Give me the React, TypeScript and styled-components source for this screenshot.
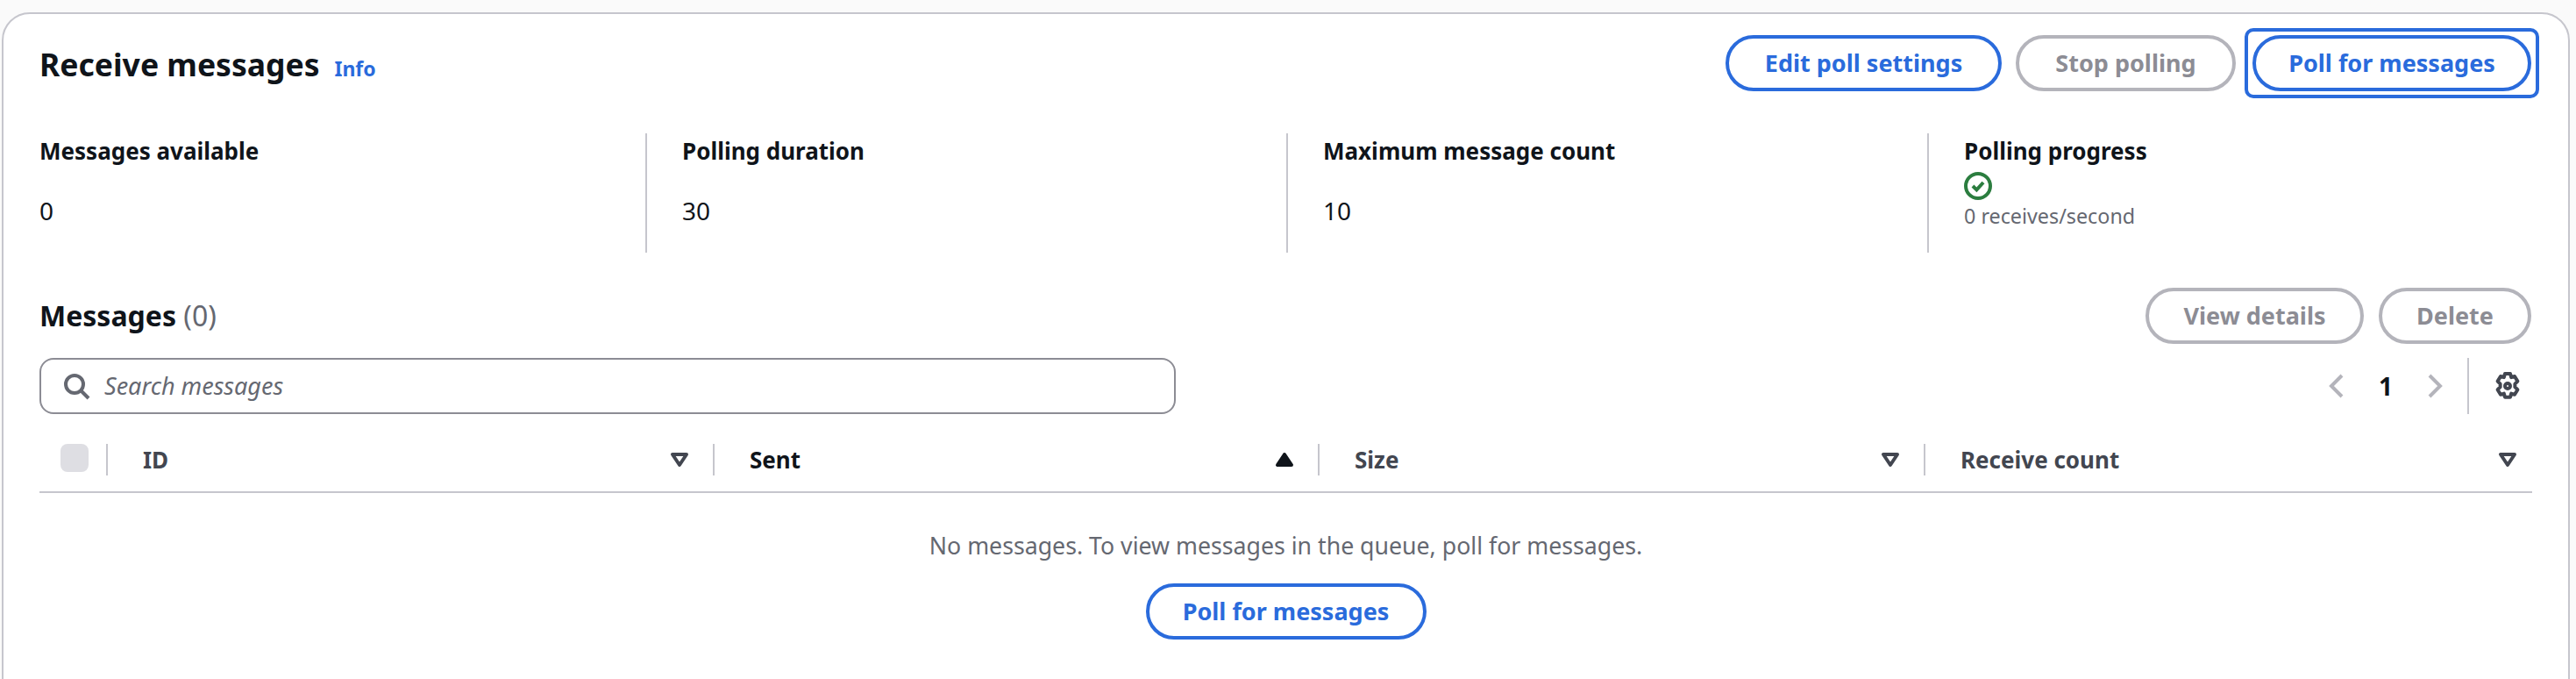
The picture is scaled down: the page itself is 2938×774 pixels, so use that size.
import styled, { createGlobalStyle } from "styled-components";

const GlobalStyle = createGlobalStyle`
  html, body {
    margin: 0;
    height: 774px;
    overflow: hidden;
    background: #fafafa;
    font-family: "Noto Sans", "Open Sans", sans-serif;
    font-size: 28px;
    line-height: 40px;
    color: #0f141a;
  }
`;

const Card = styled.section`
  box-sizing: border-box;
  width: 2929px;
  height: 860px;
  margin: 14px 0 0 2px;
  padding: 24px 41px 0 41px;
  background: #fff;
  border: 2px solid #c6c6cd;
  border-radius: 32px;
`;

const HeaderRow = styled.header`
  display: flex;
  justify-content: space-between;
  align-items: center;
  height: 64px;
  padding-right: 1px;
`;

const TitleGroup = styled.div`
  display: flex;
  align-items: baseline;
  gap: 17px;
  padding-top: 2px;
`;

const Title = styled.h2`
  margin: 0;
  font-size: 35.5px;
  line-height: 48px;
  font-weight: 700;
`;

const InfoLink = styled.a`
  font-size: 23px;
  font-weight: 700;
  color: #2a6bdc;
`;

const ButtonRow = styled.div`
  display: flex;
  gap: 16px;
`;

const Button = styled.button<{ $width: number; $muted?: boolean; $focused?: boolean }>`
  position: relative;
  box-sizing: border-box;
  width: ${(p) => p.$width}px;
  height: 64px;
  padding: 0;
  background: #fff;
  border: 4px solid ${(p) => (p.$muted ? "#b4b4bb" : "#2a6bdc")};
  border-radius: 32px;
  color: ${(p) => (p.$muted ? "#8c8c94" : "#2a6bdc")};
  font-family: inherit;
  font-size: 27px;
  font-weight: 700;
  line-height: 40px;
  white-space: nowrap;
  ${(p) =>
    p.$focused &&
    `margin-left: 3px;
    &::after {
      content: "";
      position: absolute;
      inset: -12px -13px -12px -13px;
      border: 4px solid #2a6bdc;
      border-radius: 10px;
    }`}
`;

const Stats = styled.div`
  display: grid;
  grid-template-columns: 691px 731px 731px 1fr;
  height: 136px;
  margin-top: 48px;
`;

const Stat = styled.div`
  box-sizing: border-box;
  padding: 0 0 0 40px;
  & + & {
    border-left: 2px solid #c6c6cd;
  }
  &:first-child {
    padding-left: 0;
  }
`;

const StatLabel = styled.div`
  font-size: 26px;
  font-weight: 700;
`;

const StatValue = styled.div`
  margin-top: 28px;
`;

const StatusIcon = styled.svg`
  display: block;
  width: 32px;
  height: 32px;
  margin-top: 4px;
`;

const StatNote = styled.div`
  font-size: 23.3px;
  line-height: 36px;
  color: #656871;
`;

const MessagesHead = styled(HeaderRow)`
  margin-top: 40px;
`;

const MessagesTitle = styled.h3`
  margin: 0;
  font-size: 32px;
  line-height: 44px;
  font-weight: 700;
`;

const Count = styled.span`
  font-weight: 400;
  color: #656871;
`;

const ActionRow = styled(ButtonRow)`
  gap: 17px;
`;

const Toolbar = styled.div`
  display: flex;
  justify-content: space-between;
  align-items: center;
  height: 64px;
  margin-top: 16px;
`;

const Search = styled.label`
  box-sizing: border-box;
  display: flex;
  align-items: center;
  gap: 16px;
  width: 1296px;
  height: 64px;
  padding: 0 24px;
  border: 2px solid #8c8c94;
  border-radius: 16px;
  font-size: 27px;
  font-style: italic;
  color: #656871;
`;

const Tools = styled.div`
  display: flex;
  align-items: center;
  height: 64px;
  padding-right: 12px;
`;

const PageNumber = styled.span`
  width: 80px;
  text-align: center;
  font-weight: 700;
`;

const ToolsDivider = styled.div`
  width: 2px;
  height: 64px;
  margin: 0 28px 0 21px;
  background: #c6c6cd;
`;

const Icon = styled.svg<{ $color?: string }>`
  display: block;
  flex: none;
  width: 32px;
  height: 32px;
  fill: none;
  stroke: ${(p) => p.$color ?? "#656871"};
  stroke-width: 2;
`;

const TableHead = styled.div`
  box-sizing: border-box;
  display: grid;
  grid-template-columns: 76px 692px 690px 691px 1fr;
  height: 76px;
  margin-top: 14px;
  border-bottom: 2px solid #c6c6cd;
`;

const CheckCell = styled.div`
  display: flex;
  align-items: center;
  padding: 0 0 2px 24px;
`;

const Checkbox = styled.span`
  width: 32px;
  height: 32px;
  border-radius: 8px;
  background: #dedee3;
`;

const HeadCell = styled.div<{ $last?: boolean }>`
  position: relative;
  box-sizing: border-box;
  display: flex;
  justify-content: space-between;
  align-items: center;
  padding: 1px ${(p) => (p.$last ? 12 : 22)}px 0 42px;
  font-size: 26px;
  font-weight: 700;
  &::before {
    content: "";
    position: absolute;
    left: 0;
    top: 20px;
    width: 2px;
    height: 36px;
    background: #c6c6cd;
  }
`;

const HeadLabel = styled.span<{ $active?: boolean }>`
  color: ${(p) => (p.$active ? "#0f141a" : "#424650")};
`;

const Empty = styled.div`
  display: flex;
  flex-direction: column;
  align-items: center;
  padding-top: 40px;
  color: #656871;
`;

const EmptyText = styled.p`
  margin: 0 0 23px;
  font-size: 26.7px;
`;

function SortDown() {
  return (
    <Icon viewBox="0 0 16 16" $color="#424650" strokeLinejoin="round">
      <path d="M4 5h8l-4 6z" />
    </Icon>
  );
}

function SortUp() {
  return (
    <Icon viewBox="0 0 16 16" $color="#0f141a" strokeLinejoin="round">
      <path d="M4 11h8L8 5z" fill="#0f141a" />
    </Icon>
  );
}

export default function App() {
  return (
    <>
      <GlobalStyle />
      <Card>
        <HeaderRow>
          <TitleGroup>
            <Title>Receive messages</Title>
            <InfoLink>Info</InfoLink>
          </TitleGroup>
          <ButtonRow>
            <Button $width={315}>Edit poll settings</Button>
            <Button $width={251} $muted>Stop polling</Button>
            <Button $width={318} $focused>Poll for messages</Button>
          </ButtonRow>
        </HeaderRow>

        <Stats>
          <Stat>
            <StatLabel>Messages available</StatLabel>
            <StatValue>0</StatValue>
          </Stat>
          <Stat>
            <StatLabel>Polling duration</StatLabel>
            <StatValue>30</StatValue>
          </Stat>
          <Stat>
            <StatLabel>Maximum message count</StatLabel>
            <StatValue>10</StatValue>
          </Stat>
          <Stat>
            <StatLabel>Polling progress</StatLabel>
            <StatusIcon viewBox="0 0 16 16" fill="none" stroke="#2b7d3f" strokeWidth="2">
              <circle cx="8" cy="8" r="7" />
              <path d="M5 8l2.200 2.200L11 6" />
            </StatusIcon>
            <StatNote>0 receives/second</StatNote>
          </Stat>
        </Stats>

        <MessagesHead>
          <MessagesTitle>
            Messages <Count>(0)</Count>
          </MessagesTitle>
          <ActionRow>
            <Button $width={249} $muted>View details</Button>
            <Button $width={174} $muted>Delete</Button>
          </ActionRow>
        </MessagesHead>

        <Toolbar>
          <Search>
            <Icon viewBox="0 0 16 16">
              <circle cx="7" cy="7" r="5" />
              <path d="M10.500 10.500 15 15" />
            </Icon>
            Search messages
          </Search>
          <Tools>
            <Icon viewBox="0 0 16 16" $color="#b4b4bb">
              <path d="M11 2 5 8l6 6" />
            </Icon>
            <PageNumber>1</PageNumber>
            <Icon viewBox="0 0 16 16" $color="#b4b4bb">
              <path d="M5 2l6 6-6 6" />
            </Icon>
            <ToolsDivider />
            <Icon viewBox="0 0 16 16" $color="#424650" strokeLinejoin="round">
              <circle cx="8" cy="8" r="1.500" />
              <path d="M6.500 1h3l.6 2.100 1.900-.6 1.700 2.800-1.500 1.500v1.800l1.500 1.500-1.700 2.800-1.900-.6-.6 2.100h-3l-.6-2.100-1.900.6-1.700-2.800 1.500-1.500V6.800L2.300 5.300 4 2.500l1.900.6z" />
            </Icon>
          </Tools>
        </Toolbar>

        <TableHead>
          <CheckCell>
            <Checkbox />
          </CheckCell>
          <HeadCell>
            <HeadLabel>ID</HeadLabel>
            <SortDown />
          </HeadCell>
          <HeadCell>
            <HeadLabel $active>Sent</HeadLabel>
            <SortUp />
          </HeadCell>
          <HeadCell>
            <HeadLabel>Size</HeadLabel>
            <SortDown />
          </HeadCell>
          <HeadCell $last>
            <HeadLabel>Receive count</HeadLabel>
            <SortDown />
          </HeadCell>
        </TableHead>

        <Empty>
          <EmptyText>No messages. To view messages in the queue, poll for messages.</EmptyText>
          <Button $width={320}>Poll for messages</Button>
        </Empty>
      </Card>
    </>
  );
}
